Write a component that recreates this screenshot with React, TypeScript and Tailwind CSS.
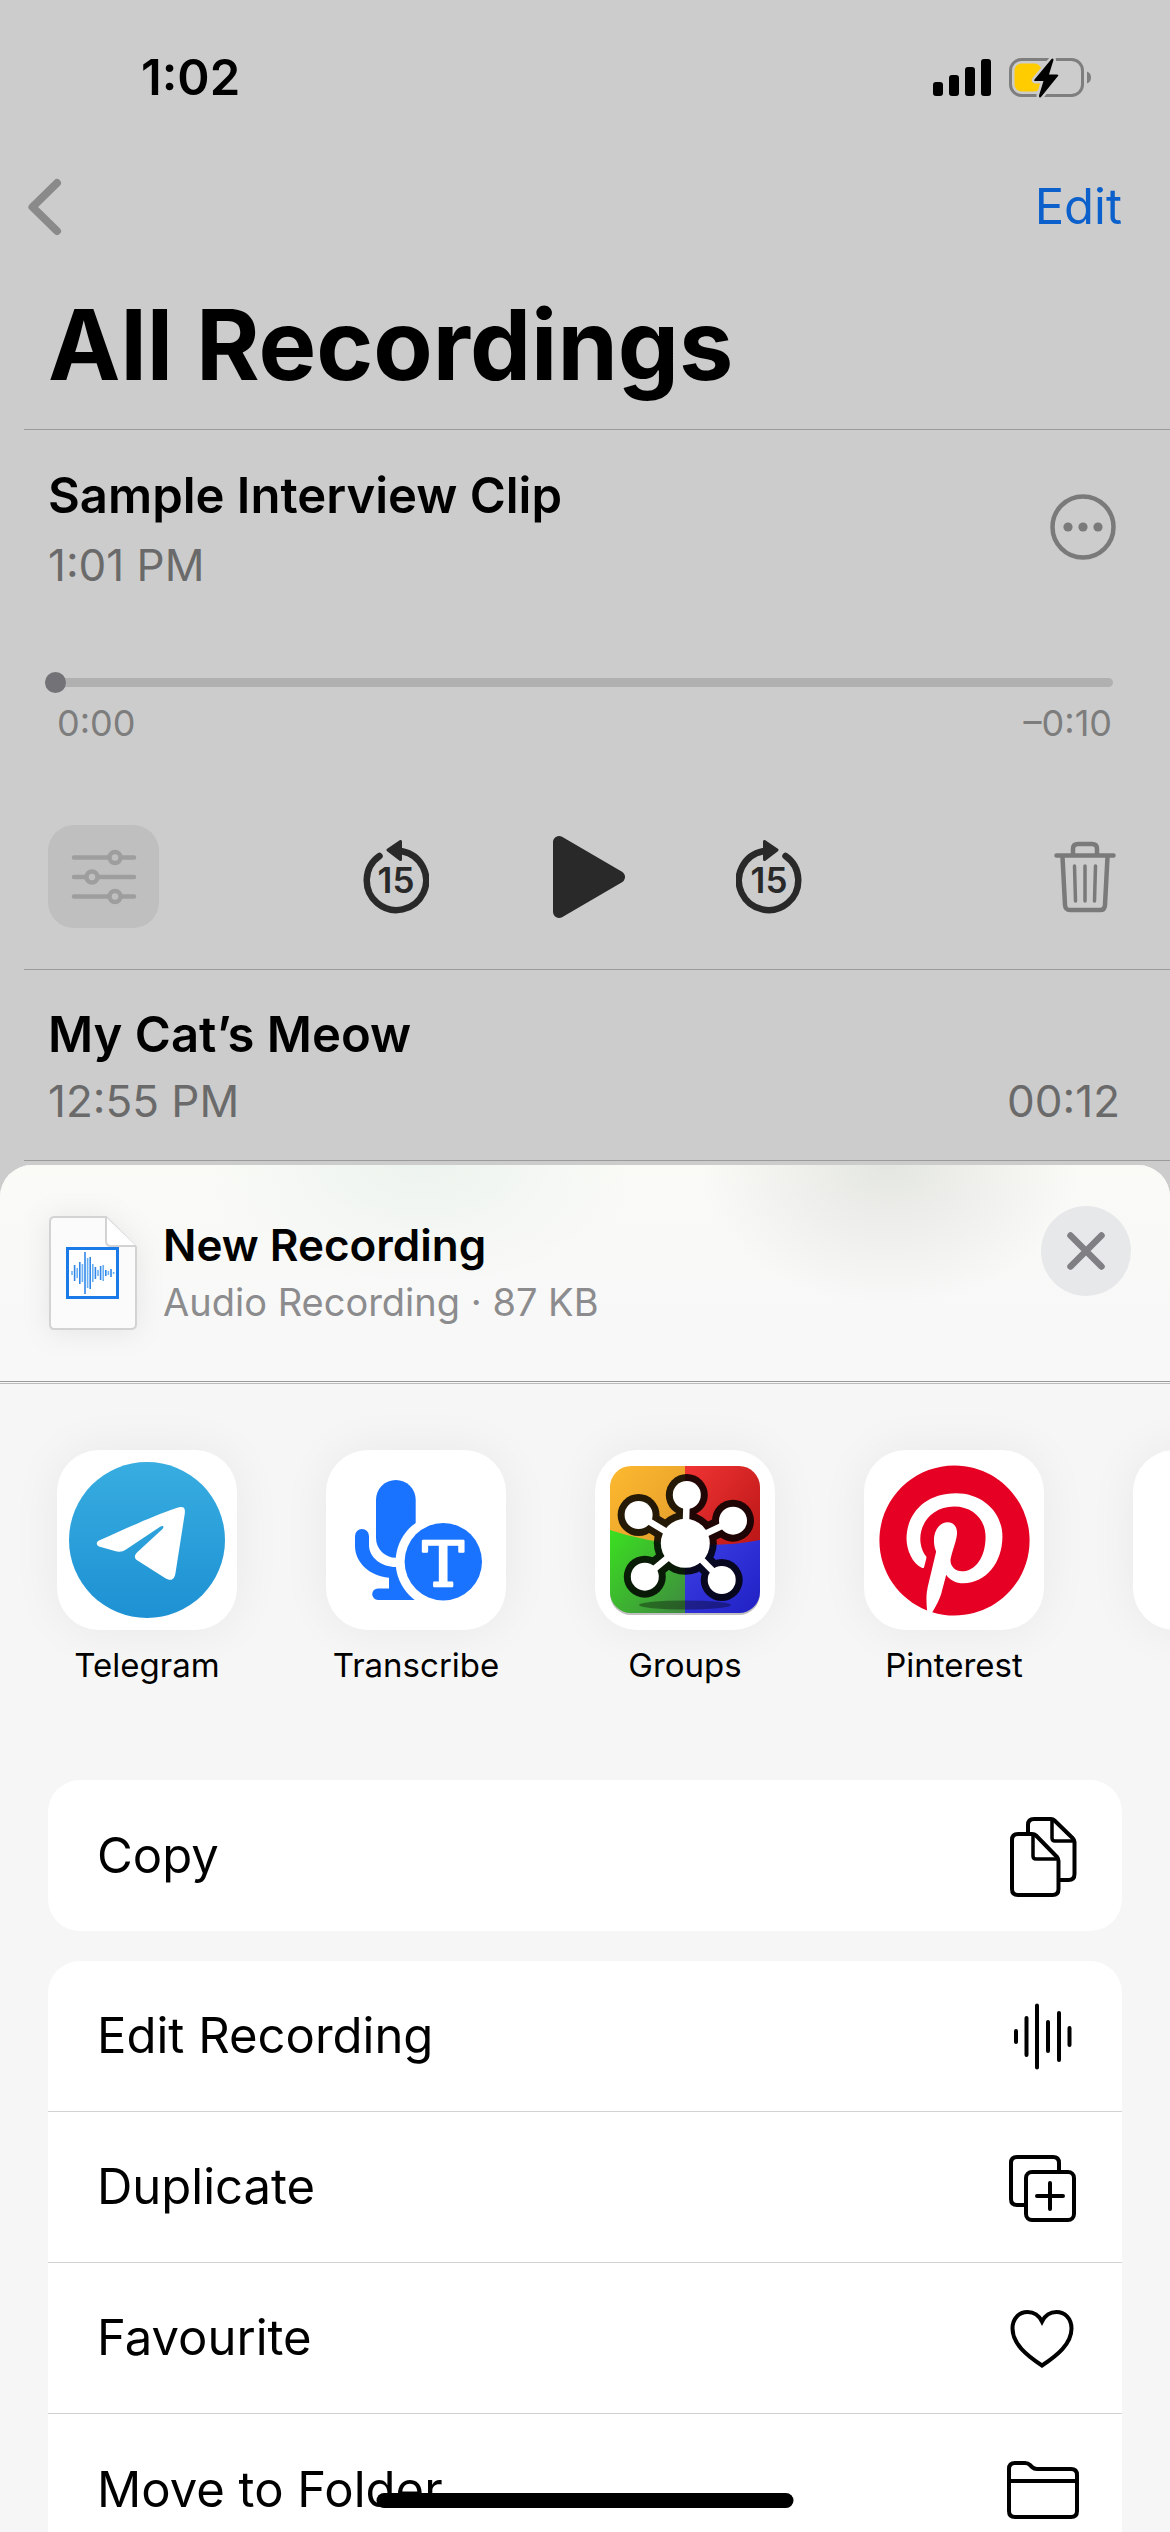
import React, { useState } from "react";
import { FaPinterest } from "react-icons/fa";

const SignalIcon = () => (
  <svg width="58" height="38" viewBox="0 0 58 38" fill="#000">
    <rect x="0" y="23" width="10" height="14" rx="3" />
    <rect x="16" y="16" width="10" height="21" rx="3" />
    <rect x="32" y="8" width="10" height="29" rx="3" />
    <rect x="48" y="0" width="10" height="37" rx="3" />
  </svg>
);

const BatteryIcon = () => (
  <svg width="83" height="42" viewBox="0 0 83 42">
    <rect x="1.5" y="2.5" width="72" height="36" rx="11" fill="none" stroke="#7e7e7e" strokeWidth="3" />
    <path d="M78 14.500a6.500 6.500 0 0 1 0 12z" fill="#7e7e7e" />
    <rect x="5.500" y="6.500" width="27" height="28" rx="7" fill="#ffcc00" />
    <path
      d="M42.500 2 25.500 22.500q-1 1.500 1 1.500h8l-4.500 14.500q-.2 3 2 1.500l17-21q1-1.500-1-1.500h-8L44.500 3q0-2.500-2-1z"
      fill="#000"
      stroke="#ccc"
      strokeWidth="5"
      paintOrder="stroke"
    />
  </svg>
);

interface SkipIconProps {
  forward?: boolean;
}

const SkipIcon: React.FC<SkipIconProps> = ({ forward }) => (
  <svg width="66" height="74" viewBox="0 0 66 74">
    <g transform={forward ? "matrix(-1 0 0 1 66 0)" : undefined}>
      <path
        d="M39 11.200A29.700 29.700 0 1 1 16.500 16"
        fill="none"
        stroke="#292929"
        strokeWidth="6.500"
        strokeLinecap="round"
      />
      <path d="M25 10 37.500 1.500v18z" fill="#292929" stroke="#292929" strokeWidth="3" strokeLinejoin="round" />
    </g>
    <text x="33" y="53" textAnchor="middle" fontSize="35" fontWeight="600" fill="#292929">
      15
    </text>
  </svg>
);

const TelegramIcon = () => (
  <svg viewBox="0 0 180 180" className="size-full">
    <defs>
      <linearGradient id="telegram" x1="0" y1="0" x2="0" y2="1">
        <stop offset="0" stopColor="#38ade0" />
        <stop offset="1" stopColor="#1d91d3" />
      </linearGradient>
    </defs>
    <circle cx="90" cy="90" r="78" fill="url(#telegram)" />
    <path
      fill="#fff"
      d="M42 90.500C68 79 97 65.500 119.500 58c6.500-2 9-1 8.300 5.500L118.500 123c-1 7-5 8.500-10.500 5L80.500 110.500c-3.500-2.500-3.500-5 0-8.500L105.500 79c2-2.500.5-4-2-2.500L69 99.500c-4.500 3-7.500 2.500-12 1.200L42 96.500c-3-1.500-3-4.500 0-6z"
    />
  </svg>
);

const TranscribeIcon = () => (
  <svg viewBox="0 0 180 180" className="size-full">
    <g fill="#1a73ff">
      <rect x="50" y="30" width="39.700" height="77.700" rx="19.800" />
      <path d="M29 86a7 7 0 0 1 14 0v9c0 13 13 22 27 22h20v33H52a5.800 5.800 0 0 1 0-11.600h11v-10.700C43 126 29 112 29 96z" />
      <circle cx="117.300" cy="111.700" r="47.700" fill="#fff" />
      <circle cx="117.300" cy="111.700" r="38.700" />
    </g>
    <text
      x="117.300"
      y="136"
      textAnchor="middle"
      fontSize="62"
      fill="#fff"
      stroke="#fff"
      strokeWidth="2.500"
      strokeLinejoin="round"
      fontFamily="DejaVu Serif, serif"
    >
      T
    </text>
  </svg>
);

const nodes = [
  [91.800, 45],
  [43.600, 65],
  [138, 70.700],
  [49.800, 126.700],
  [126.700, 130],
];

const GroupsIcon = () => (
  <svg viewBox="0 0 180 180" className="size-full">
    <defs>
      <clipPath id="groups-clip">
        <rect x="15" y="16" width="150" height="147" rx="21" />
      </clipPath>
      <linearGradient id="g-orange" x1="0" y1="0" x2="1" y2="1">
        <stop offset="0" stopColor="#fdb92e" />
        <stop offset="1" stopColor="#e09a2c" />
      </linearGradient>
      <linearGradient id="g-red" x1="0" y1="0" x2="1" y2="1">
        <stop offset="0" stopColor="#f03434" />
        <stop offset="1" stopColor="#b81414" />
      </linearGradient>
      <linearGradient id="g-green" x1="0" y1="0" x2="1" y2="1">
        <stop offset="0" stopColor="#3be020" />
        <stop offset="1" stopColor="#3f8a40" />
      </linearGradient>
      <linearGradient id="g-blue" x1="0" y1="0" x2="1" y2="1">
        <stop offset="0" stopColor="#3c40e6" />
        <stop offset="1" stopColor="#2020c4" />
      </linearGradient>
    </defs>
    <rect x="15" y="18" width="150" height="147" rx="21" fill="#000" opacity="0.25" />
    <g clipPath="url(#groups-clip)">
      <rect x="15" y="16" width="75" height="90" fill="url(#g-orange)" />
      <rect x="90" y="16" width="75" height="90" fill="url(#g-red)" />
      <path d="M15 80q35 12 75 14v70H15z" fill="url(#g-green)" />
      <path d="M90 94q40 3 75-4v74H90z" fill="url(#g-blue)" />
      <ellipse cx="90" cy="155" rx="46" ry="4.500" fill="#000" opacity="0.35" />
    </g>
    <g fill="#000" stroke="#000" opacity="0.85">
      {nodes.map(([x, y]) => (
        <React.Fragment key={x}>
          <line x1="90.300" y1="93.300" x2={x} y2={y} strokeWidth="20" />
          <circle cx={x} cy={y} r="21" stroke="none" />
        </React.Fragment>
      ))}
      <circle cx="90.300" cy="93.300" r="31.500" stroke="none" />
    </g>
    <g fill="#fff" stroke="#fff">
      {nodes.map(([x, y]) => (
        <React.Fragment key={x}>
          <line x1="90.300" y1="93.300" x2={x} y2={y} strokeWidth="6.500" />
          <circle cx={x} cy={y} r="14" stroke="none" />
        </React.Fragment>
      ))}
      <circle cx="90.300" cy="93.300" r="24.500" stroke="none" />
    </g>
  </svg>
);

const PinterestIcon = () => (
  <div className="flex size-full items-center justify-center">
    <FaPinterest size={155} color="#e60023" />
  </div>
);

// half-heights of the waveform bars on the document icon
const bars = [2, 8, 5, 11, 9, 21, 15, 16, 9, 6, 3, 7, 8, 3, 2, 4, 1];

const AudioFileIcon = () => (
  <svg width="88" height="114" viewBox="0 0 88 114" className="shrink-0 drop-shadow-[0_2px_14px_rgba(0,0,0,0.08)]">
    <path d="M5 1h52l30 30v77q0 5-5 5H5q-4 0-4-5V6q0-5 4-5z" fill="#fbfbfc" stroke="#d3d3d4" strokeWidth="2" />
    <path d="M57 1v24q0 5 5 5h25" fill="#fff" stroke="#d3d3d4" strokeWidth="2" />
    <rect x="18.500" y="32.500" width="50" height="49" fill="#fff" stroke="#1a7ae8" strokeWidth="3" />
    {bars.map((h, i) => (
      <line
        key={i}
        x1={23 + i * 2.600}
        x2={23 + i * 2.600}
        y1={57 - h}
        y2={57 + h}
        stroke={i % 2 ? "#3187e8" : "#69b0f5"}
        strokeWidth="1.600"
      />
    ))}
  </svg>
);

const actionSvg = {
  width: 76,
  height: 84,
  viewBox: "0 0 76 84",
  fill: "none",
  stroke: "#000",
  strokeWidth: 4,
  strokeLinecap: "round" as const,
  strokeLinejoin: "round" as const,
};

const CopyIcon = () => (
  <svg {...actionSvg}>
    <path d="M23 18V11q0-6 6-6h17q2 0 3.500 1.500L67.500 24q2 2 2 4v32q0 6-6 6h-8" />
    <path d="M47 6v18q0 3 3 3h18" strokeWidth="3.500" />
    <path d="M13 20h14q2.500 0 4 1.500L52 43q1.500 2 1.500 4v28q0 6-6 6H13q-6 0-6-6V26q0-6 6-6z" />
    <path d="M28 21v21q0 3 3 3h21" strokeWidth="3.500" />
  </svg>
);

const WaveformIcon = () => (
  <svg {...actionSvg}>
    <path d="M11 37v11M21.500 24v37M32 11.500v62M43 28v29M54 19v47M64.500 34v17" />
  </svg>
);

const DuplicateIcon = () => (
  <svg {...actionSvg}>
    <path d="M21 60H12q-6 0-6-6V18q0-6 6-6h36q6 0 6 6v9" />
    <rect x="21" y="27" width="48" height="48" rx="6" />
    <path d="M45 38v26M32 51h26" />
  </svg>
);

const HeartIcon = () => (
  <svg {...actionSvg} strokeLinejoin="miter">
    <path d="M37 69.500C22 59.500 7.500 48 7.500 32.500 7.500 22 14.500 16 22.500 16c7 0 11.500 3.500 14.500 9.500C40 19.500 44.500 16 51.500 16 59.500 16 66.500 22 66.500 32.500 66.500 48 52 59.500 37 69.500z" />
  </svg>
);

const FolderIcon = () => (
  <svg {...actionSvg}>
    <path d="M4 63V21q0-6 6-6h10q3 0 5 2l2 2q2 2 5 2h34q6 0 6 6v36q0 6-6 6H10q-6 0-6-6zM4 33h68" />
  </svg>
);

interface AppTileProps {
  name: string;
  children?: React.ReactNode;
}

const AppTile: React.FC<AppTileProps> = ({ name, children }) => (
  <button className="flex w-[180px] shrink-0 flex-col items-center gap-[14px]">
    <span className="size-[180px] overflow-hidden rounded-[42px] bg-white shadow-[0_0_50px_rgba(0,0,0,0.06)]">
      {children}
    </span>
    <span className="text-[33px] leading-[42px]">{name}</span>
  </button>
);

interface ActionRowProps {
  label: string;
  icon: React.ReactNode;
}

const ActionRow: React.FC<ActionRowProps> = ({ label, icon }) => (
  <button className="flex h-[151px] w-full items-center justify-between pr-[41px] pl-[49px] text-left text-[49px] leading-[60px]">
    {label}
    {icon}
  </button>
);

export default function App() {
  const [position, setPosition] = useState(0);

  return (
    <div className="relative flex h-screen flex-col overflow-hidden bg-[#ccc] font-['Inter',sans-serif] text-black">
      <div className="flex h-[156px] shrink-0 items-center justify-between pr-[78px] pl-[141px]">
        <span className="text-[49px] leading-[60px] font-semibold">1:02</span>
        <div className="flex items-center gap-[18px]">
          <SignalIcon />
          <BatteryIcon />
        </div>
      </div>

      <nav className="flex h-[102px] shrink-0 items-center justify-between pr-[48px] pl-[24px]">
        <button aria-label="Back">
          <svg width="42" height="66" viewBox="0 0 42 66">
            <path d="M33 9 8.500 33 33 57" fill="none" stroke="#8a8a8a" strokeWidth="8" strokeLinecap="round" strokeLinejoin="round" />
          </svg>
        </button>
        <button className="text-[49px] leading-[60px] text-[#0b60cc]">Edit</button>
      </nav>

      <h1 className="shrink-0 px-[48px] pt-[27px] pb-[24px] text-[97px] leading-[120px] font-bold">All Recordings</h1>

      <section className="ml-[24px] shrink-0 border-t border-[#9b9b9b] pt-[36px] pr-[54px] pb-[41px] pl-[24px]">
        <div className="flex items-center justify-between">
          <div className="flex flex-col gap-[12px]">
            <h2 className="text-[49px] leading-[60px] font-semibold">Sample Interview Clip</h2>
            <p className="text-[44px] leading-[54px] text-[#6a6a6a]">1:01 PM</p>
          </div>
          <button aria-label="More" className="pb-1">
            <svg width="66" height="66" viewBox="0 0 66 66" fill="#7a7a7a">
              <circle cx="33" cy="33" r="30.500" fill="none" stroke="#7a7a7a" strokeWidth="4.500" />
              <circle cx="18" cy="33" r="4.600" />
              <circle cx="33" cy="33" r="4.600" />
              <circle cx="48" cy="33" r="4.600" />
            </svg>
          </button>
        </div>

        <input
          type="range"
          aria-label="Playback position"
          min={0}
          max={10}
          value={position}
          onChange={(e) => setPosition(parseFloat(e.target.value))}
          className="mt-[86px] -ml-[3px] block h-[9px] w-full appearance-none rounded-full bg-[#b0b0b0] [&::-webkit-slider-thumb]:size-[21px] [&::-webkit-slider-thumb]:appearance-none [&::-webkit-slider-thumb]:rounded-full [&::-webkit-slider-thumb]:bg-[#737277]"
        />
        <div className="mt-[15px] flex justify-between pr-[4px] pl-[9px] text-[36px] leading-[42px] text-[#7d7d7d]">
          <span>0:00</span>
          <span>–0:10</span>
        </div>

        <div className="mt-[81px] grid grid-cols-[1fr_auto_1fr] items-center">
          <button
            aria-label="Options"
            className="flex h-[103px] w-[111px] items-center justify-center rounded-[26px] bg-[#bfbfbf]"
          >
            <svg width="66" height="56" viewBox="0 0 66 56" fill="#bfbfbf" stroke="#9e9e9e" strokeWidth="4.500" strokeLinecap="round">
              <path d="M3 8.500h60M3 28h60M3 47.500h60" />
              <circle cx="44" cy="8.500" r="5.500" />
              <circle cx="21" cy="28" r="5.500" />
              <circle cx="44" cy="47.500" r="5.500" />
            </svg>
          </button>
          <div className="flex items-center gap-[111px]">
            <button aria-label="Skip back 15 seconds">
              <SkipIcon />
            </button>
            <button aria-label="Play">
              <svg width="85" height="84" viewBox="0 0 85 84">
                <path d="M19 7v70l60-35z" fill="#292929" stroke="#292929" strokeWidth="12" strokeLinejoin="round" />
              </svg>
            </button>
            <button aria-label="Skip forward 15 seconds">
              <SkipIcon forward />
            </button>
          </div>
          <button aria-label="Delete" className="justify-self-end">
            <svg width="62" height="72" viewBox="0 0 62 72" fill="none" stroke="#7a7a7a" strokeWidth="4.500" strokeLinecap="round">
              <path d="M2.500 14.500h57M19 13V8q0-5 5-5h14q5 0 5 5v5M8.500 16l2.500 48q.3 5 5 5h30q4.700 0 5-5l2.500-48" />
              <path d="M20.500 25l1 35M31 25v35M41.500 25l-1 35" strokeWidth="3.500" />
            </svg>
          </button>
        </div>
      </section>

      <section className="mb-[4px] ml-[24px] flex shrink-0 items-end justify-between border-y border-[#9b9b9b] pt-[35px] pr-[50px] pb-[32px] pl-[24px]">
        <div className="flex flex-col gap-[9px]">
          <h2 className="text-[49px] leading-[60px] font-semibold">My Cat’s Meow</h2>
          <p className="text-[44px] leading-[54px] text-[#6a6a6a]">12:55 PM</p>
        </div>
        <span className="text-[44px] leading-[54px] text-[#6a6a6a]">00:12</span>
      </section>

      <main className="flex-1 overflow-hidden rounded-t-[32px] bg-[#f6f6f6]">
        <header className="flex h-[216px] items-start justify-between bg-[radial-gradient(ellipse_190px_140px_at_76%_0%,#e4e6e2,transparent),radial-gradient(ellipse_220px_120px_at_36%_0%,#edf3ee,transparent),linear-gradient(to_bottom,#fafbf7,#f8f8f8_70%)] pt-[41px] pr-[39px] pl-[49px]">
          <div className="mt-[10px] flex items-center gap-[26px]">
            <AudioFileIcon />
            <div className="flex flex-col gap-[6px] pb-[3px]">
              <h2 className="text-[44px] leading-[54px] font-semibold">New Recording</h2>
              <p className="text-[38px] leading-[48px] text-[#8c8c8e]">Audio Recording · 87 KB</p>
            </div>
          </div>
          <button aria-label="Close" className="flex size-[90px] items-center justify-center rounded-full bg-[#e7e8ea]">
            <svg width="42" height="42" viewBox="0 0 42 42">
              <path d="M5.500 5.500l31 31M36.500 5.500l-31 31" stroke="#7f7f84" strokeWidth="6.500" strokeLinecap="round" />
            </svg>
          </button>
        </header>
        <div className="h-[3px] border-t border-b border-t-[#9a9a9a] border-b-[#bcbcbc]" />

        <div className="flex gap-[89px] overflow-hidden px-[57px] pt-[66px] pb-[94px]">
          <AppTile name="Telegram">
            <TelegramIcon />
          </AppTile>
          <AppTile name="Transcribe">
            <TranscribeIcon />
          </AppTile>
          <AppTile name="Groups">
            <GroupsIcon />
          </AppTile>
          <AppTile name="Pinterest">
            <PinterestIcon />
          </AppTile>
          <AppTile name="" />
        </div>

        <div className="flex flex-col gap-[30px] px-[48px]">
          <div className="rounded-[32px] bg-white">
            <ActionRow label="Copy" icon={<CopyIcon />} />
          </div>
          <div className="divide-y divide-[#d2d2d3] rounded-[32px] bg-white">
            <ActionRow label="Edit Recording" icon={<WaveformIcon />} />
            <ActionRow label="Duplicate" icon={<DuplicateIcon />} />
            <ActionRow label="Favourite" icon={<HeartIcon />} />
            <ActionRow label="Move to Folder" icon={<FolderIcon />} />
          </div>
        </div>
      </main>

      {/* home indicator */}
      <div className="absolute bottom-[24px] left-1/2 h-[15px] w-[417px] -translate-x-1/2 rounded-full bg-black" />
    </div>
  );
}
